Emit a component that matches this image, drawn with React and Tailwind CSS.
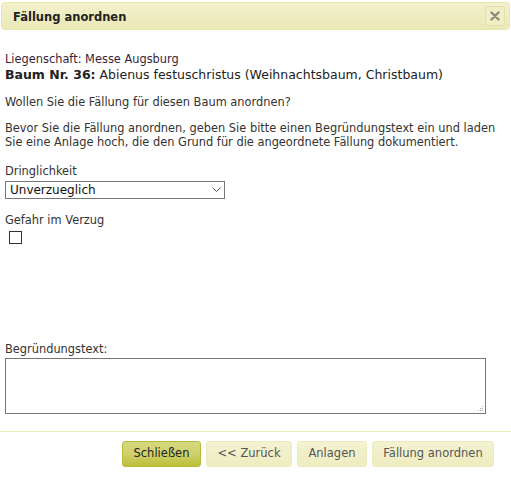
export default function App() {
  const font = { fontFamily: '"DejaVu Sans", Verdana, sans-serif' };
  return (
    <div className="relative h-[479px] w-[511px] bg-white text-[11.4px] text-[#333]" style={font}>
      <div className="mx-px mt-[2px] flex h-[28px] items-center justify-between rounded-[4px] border border-[#e8e6b0] bg-gradient-to-b from-[#f2f1cc] to-[#ebe9b6] pl-[11px] pr-[4px]">
        <span className="pt-[3px] text-[11.5px] font-bold text-[#222]">Fällung anordnen</span>
        <button
          type="button"
          className="flex h-[20px] w-[20px] items-center justify-center rounded-[3px] border border-[#e3e1ab] bg-[#efeec4]"
        >
          <svg width="10" height="10" viewBox="0 0 10 10" aria-hidden>
            <path d="M1.5 1.5l7 7M8.5 1.5l-7 7" stroke="#8a8a80" strokeWidth="2.4" strokeLinecap="round" />
          </svg>
        </button>
      </div>

      <div className="px-[5px] pt-[23px]">
        <p className="leading-[13px] text-[#3a1f3a]">Liegenschaft: Messe Augsburg</p>
        <p className="mt-[1px] text-[12.5px] leading-[16px] text-[#222]">
          <span className="font-bold">Baum Nr. 36:</span> Abienus festuschristus (Weihnachtsbaum, Christbaum)
        </p>

        <p className="mt-[12px] leading-[14px]">Wollen Sie die Fällung für diesen Baum anordnen?</p>
        <p className="mt-[12px] leading-[14px]">
          Bevor Sie die Fällung anordnen, geben Sie bitte einen Begründungstext ein und laden Sie eine Anlage hoch, die den Grund für die angeordnete Fällung dokumentiert.
        </p>

        <p className="mt-[15px] leading-[14px]">Dringlichkeit</p>
        <div className="mt-[3px] flex h-[18px] w-[220px] items-center justify-between border border-[#767676] pl-[4px] pr-[3px] text-[12px] text-[#111]">
          <span>Unverzueglich</span>
          <svg width="9" height="6" viewBox="0 0 9 6" aria-hidden>
            <path d="M0.5 0.5l4 4 4-4" fill="none" stroke="#555" strokeWidth="1" />
          </svg>
        </div>

        <p className="mt-[14px] leading-[14px]">Gefahr im Verzug</p>
        <div className="ml-[4px] mt-[4px] h-[13px] w-[13px] border border-[#333] bg-white" />

        <div className="h-[98px]" />

        <p className="leading-[14px]">Begründungstext:</p>
        <div className="relative mt-[2px] h-[56px] w-[481px] border border-[#767676]">
          <svg className="absolute bottom-[1px] right-[1px]" width="7" height="7" viewBox="0 0 7 7" aria-hidden>
            <rect x="5" y="1" width="1" height="1" fill="#aaa" />
            <rect x="3" y="3" width="1" height="1" fill="#aaa" />
            <rect x="5" y="3" width="1" height="1" fill="#aaa" />
            <rect x="1" y="5" width="1" height="1" fill="#aaa" />
            <rect x="3" y="5" width="1" height="1" fill="#aaa" />
            <rect x="5" y="5" width="1" height="1" fill="#aaa" />
          </svg>
        </div>
      </div>

      <div className="mt-[17px] border-t border-[#ecebbd]" />

      <div className="flex justify-end gap-[5px] pr-[17px] pt-[9px] text-[11.5px]">
        <button
          type="button"
          className="h-[26px] w-[79px] rounded-[3px] border border-[#b8ba3c] bg-gradient-to-b from-[#d6d87e] via-[#cfd16a] to-[#bcbe36] text-[#222]"
        >
          Schließen
        </button>
        <button
          type="button"
          className="h-[26px] w-[86px] rounded-[3px] border border-[#ebe9bd] bg-gradient-to-b from-[#f4f3d2] to-[#eeecc0] text-[#555]"
        >
          &lt;&lt; Zurück
        </button>
        <button
          type="button"
          className="h-[26px] w-[70px] rounded-[3px] border border-[#ebe9bd] bg-gradient-to-b from-[#f4f3d2] to-[#eeecc0] text-[#555]"
        >
          Anlagen
        </button>
        <button
          type="button"
          className="h-[26px] w-[122px] rounded-[3px] border border-[#ebe9bd] bg-gradient-to-b from-[#f4f3d2] to-[#eeecc0] text-[#555]"
        >
          Fällung anordnen
        </button>
      </div>
    </div>
  );
}
